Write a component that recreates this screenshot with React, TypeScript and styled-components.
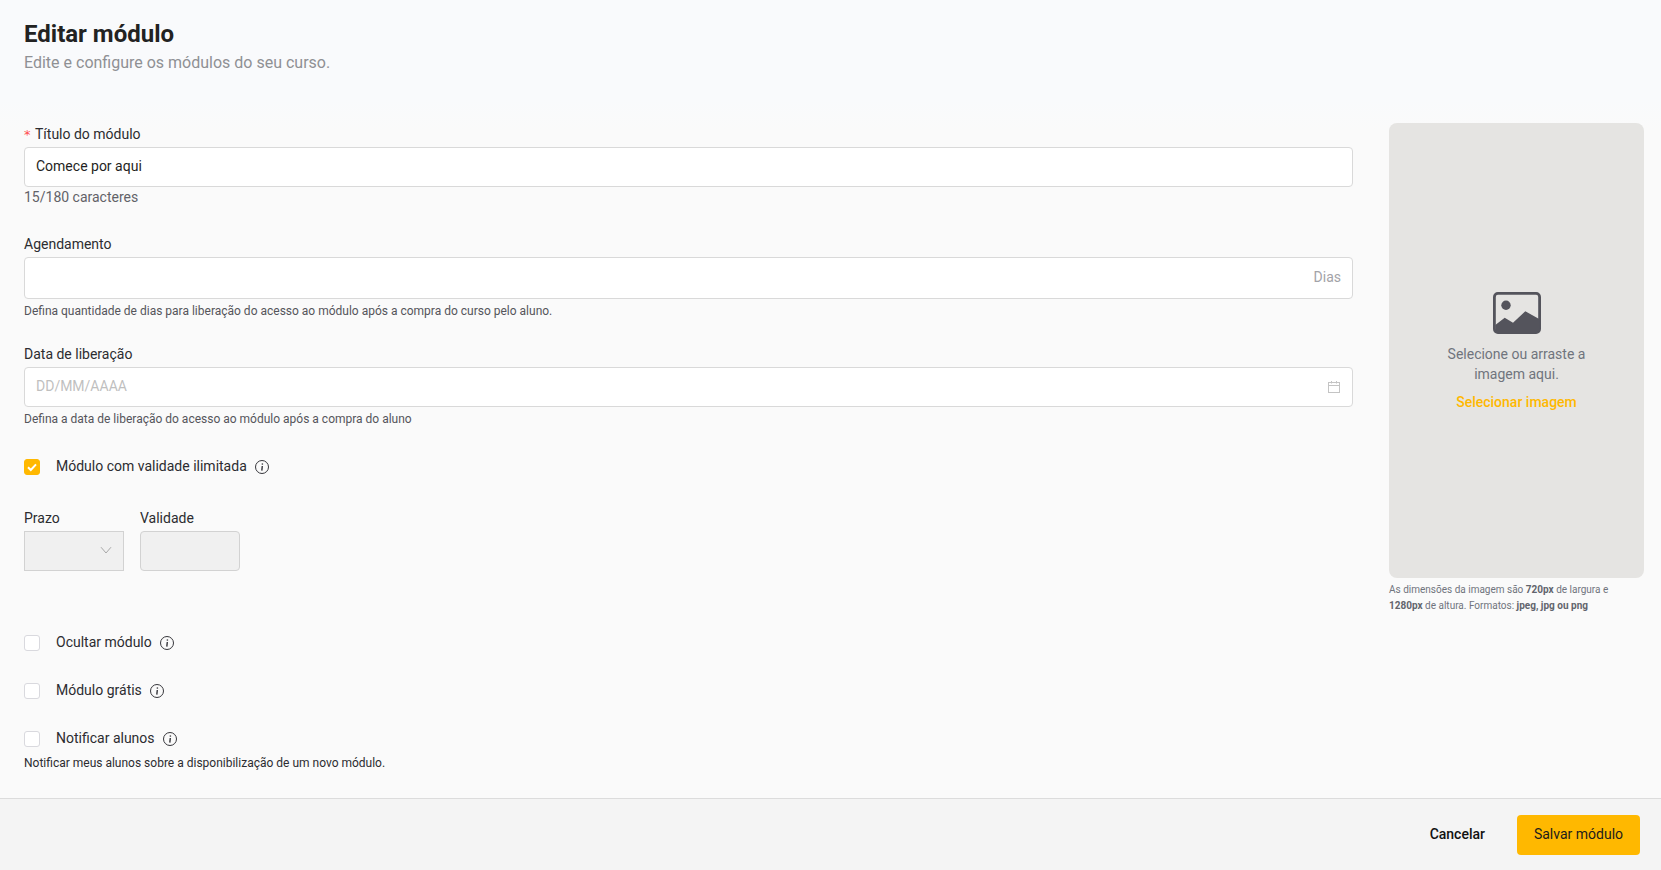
import React from 'react';
import styled, { createGlobalStyle } from 'styled-components';

const GlobalStyle = createGlobalStyle`
  html, body {
    margin: 0;
    padding: 0;
    height: 100%;
    background: #fafafa;
    font-family: Roboto, "Liberation Sans", sans-serif;
  }
  * { box-sizing: border-box; }
`;

const Page = styled.div`
  display: flex;
  flex-direction: column;
  height: 870px;
  background: linear-gradient(to bottom, #f9fafc 0, #f9fafc 100px, #fafafa 130px);
`;

const Header = styled.header`
  height: 123px;
  padding: 20px 24px 0;
`;

const Title = styled.h1`
  margin: 0;
  font-size: 24px;
  line-height: 28px;
  font-weight: 700;
  color: #222222;
`;

const Subtitle = styled.p`
  margin: 3px 0 0;
  font-size: 16px;
  line-height: 24px;
  color: #8f9094;
`;

const Content = styled.main`
  flex: 1;
  display: grid;
  grid-template-columns: 1329px 255px;
  column-gap: 36px;
  padding-left: 24px;
`;

const Form = styled.form`
  display: flex;
  flex-direction: column;
`;

const Label = styled.label`
  display: block;
  height: 24px;
  font-size: 14px;
  line-height: 22px;
  color: #2c2c30;
  white-space: nowrap;
`;

const Required = styled.span`
  color: #ff4d4f;
  font-size: 13px;
  margin-right: 4.5px;
  font-family: SimSun, "DejaVu Sans", sans-serif;
`;

const InputBox = styled.div<{ $height: number; $lift?: boolean }>`
  display: flex;
  align-items: center;
  justify-content: space-between;
  height: ${(p) => p.$height}px;
  padding: 0 11px ${(p) => (p.$lift ? '2px' : '0')};
  background: #ffffff;
  border: 1px solid #d9d9d9;
  border-radius: 4px;
  font-size: 14px;
  color: #1f1f23;
`;

const Placeholder = styled.span`
  color: #bfbfbf;
  padding-bottom: 2px;
`;

const Suffix = styled.span`
  color: #a3a3a8;
  padding-bottom: 2px;
`;

const Counter = styled.div`
  font-size: 14px;
  line-height: 20px;
  color: #626268;
`;

const HelpText = styled.div<{ $dark?: boolean; $mt: number }>`
  margin-top: ${(p) => p.$mt}px;
  font-size: 12px;
  line-height: 18px;
  color: ${(p) => (p.$dark ? '#2c2c30' : '#55555b')};
`;

const Block = styled.div<{ $mt: number }>`
  margin-top: ${(p) => p.$mt}px;
`;

const CheckRow = styled.div<{ $mt: number }>`
  display: flex;
  align-items: center;
  height: 24px;
  margin-top: ${(p) => p.$mt}px;
`;

const CheckBox = styled.span<{ $checked?: boolean }>`
  display: flex;
  align-items: center;
  justify-content: center;
  width: 16px;
  height: 16px;
  margin-right: 16px;
  border-radius: 3px;
  background: ${(p) => (p.$checked ? '#ffb800' : '#ffffff')};
  border: 1px solid ${(p) => (p.$checked ? '#ffb800' : '#d9d9de')};
`;

const CheckText = styled.span`
  padding-bottom: 2px;
  font-size: 14px;
  color: #2c2c30;
  margin-right: 8px;
  white-space: nowrap;
`;

const SmallFields = styled.div`
  display: flex;
  gap: 16px;
  margin-top: 28px;
`;

const SmallField = styled.div`
  width: 100px;
`;

const DisabledBox = styled.div<{ $square?: boolean }>`
  display: flex;
  align-items: center;
  justify-content: flex-end;
  height: 40px;
  padding-right: 11px;
  background: #f0f0f0;
  border: 1px solid #d2d2d2;
  border-radius: ${(p) => (p.$square ? '0' : '4px')};
`;

const Aside = styled.aside`
  display: flex;
  flex-direction: column;
`;

const Dropzone = styled.div`
  display: flex;
  flex-direction: column;
  align-items: center;
  justify-content: center;
  height: 455px;
  padding-top: 3px;
  background: #e5e4e2;
  border-radius: 8px;
`;

const DropText = styled.div`
  width: 160px;
  margin-top: 10px;
  font-size: 14px;
  line-height: 20px;
  text-align: center;
  color: #70747d;
`;

const DropLink = styled.a`
  margin-top: 8px;
  font-size: 14px;
  line-height: 20px;
  font-weight: 500;
  color: #ffb800;
`;

const ImageHint = styled.p`
  margin: 4px 0 0;
  font-size: 10px;
  line-height: 16px;
  color: #70747d;

  b {
    font-weight: 700;
    color: #62656d;
  }
`;

const Footer = styled.footer`
  display: flex;
  align-items: center;
  justify-content: flex-end;
  gap: 32px;
  height: 72px;
  padding: 0 21px 0 0;
  background: #f4f4f4;
  border-top: 1px solid #dcdcdc;
`;

const CancelButton = styled.button`
  padding: 0 0 2px;
  border: 0;
  background: none;
  font-family: inherit;
  font-size: 14px;
  font-weight: 500;
  color: #111111;
`;

const SaveButton = styled.button`
  width: 123px;
  height: 40px;
  padding: 0 0 2px;
  border: 0;
  border-radius: 4px;
  background: #ffb800;
  font-family: inherit;
  font-size: 14px;
  color: #1c1c1c;
`;

const InfoIcon = () => (
  <svg width="14" height="14" viewBox="0 0 14 14" fill="none" stroke="#36363b" strokeWidth="1">
    <circle cx="7" cy="7" r="6.5" />
    <path d="M7.4 3.4v1.3" strokeWidth="1.4" />
    <path d="M7.3 6 6.8 10.6" strokeWidth="1.4" />
  </svg>
);

const CheckIcon = () => (
  <svg width="12" height="12" viewBox="0 0 12 12" fill="none" stroke="#ffffff" strokeWidth="2">
    <path d="M2 6.2 4.8 9 10 3.4" />
  </svg>
);

const CalendarIcon = () => (
  <svg width="14" height="14" viewBox="0 0 14 14" fill="none" stroke="#c4c4c4" strokeWidth="1">
    <rect x="1.5" y="2.5" width="11" height="10" />
    <path d="M1.5 5.5h11M4.5 1v2.5M9.5 1v2.5" />
  </svg>
);

const ChevronIcon = () => (
  <svg width="12" height="12" viewBox="0 0 12 12" fill="none" stroke="#a8a8a8" strokeWidth="1">
    <path d="M1 2.2 6 8 11 2.2" />
  </svg>
);

const ImageIcon = () => (
  <svg width="48" height="42" viewBox="0 0 48 42">
    <rect x="1.4" y="1.4" width="45.2" height="39.2" rx="3.5" fill="none" stroke="#54545c" strokeWidth="2.8" />
    <circle cx="13" cy="13.3" r="4.7" fill="#54545c" />
    <path d="M2.3 33 11.7 25.7 20 30.7 32.3 19.3 46.6 27.3V37a3 3 0 0 1-3 3H5.3a3 3 0 0 1-3-3Z" fill="#54545c" />
  </svg>
);

export default function App() {
  return (
    <Page>
      <GlobalStyle />
      <Header>
        <Title>Editar módulo</Title>
        <Subtitle>Edite e configure os módulos do seu curso.</Subtitle>
      </Header>
      <Content>
        <Form>
          <Label>
            <Required>*</Required>Título do módulo
          </Label>
          <InputBox $height={40} $lift>Comece por aqui</InputBox>
          <Counter>15/180 caracteres</Counter>

          <Block $mt={26}>
            <Label>Agendamento</Label>
            <InputBox $height={42}>
              <span />
              <Suffix>Dias</Suffix>
            </InputBox>
            <HelpText $mt={3}>Defina quantidade de dias para liberação do acesso ao módulo após a compra do curso pelo aluno.</HelpText>
          </Block>

          <Block $mt={23}>
            <Label>Data de liberação</Label>
            <InputBox $height={40}>
              <Placeholder>DD/MM/AAAA</Placeholder>
              <CalendarIcon />
            </InputBox>
            <HelpText $mt={3}>Defina a data de liberação do acesso ao módulo após a compra do aluno</HelpText>
          </Block>

          <CheckRow $mt={27}>
            <CheckBox $checked><CheckIcon /></CheckBox>
            <CheckText>Módulo com validade ilimitada</CheckText>
            <InfoIcon />
          </CheckRow>

          <SmallFields>
            <SmallField>
              <Label>Prazo</Label>
              <DisabledBox $square><ChevronIcon /></DisabledBox>
            </SmallField>
            <SmallField>
              <Label>Validade</Label>
              <DisabledBox />
            </SmallField>
          </SmallFields>

          <CheckRow $mt={60}>
            <CheckBox />
            <CheckText>Ocultar módulo</CheckText>
            <InfoIcon />
          </CheckRow>
          <CheckRow $mt={24}>
            <CheckBox />
            <CheckText>Módulo grátis</CheckText>
            <InfoIcon />
          </CheckRow>
          <CheckRow $mt={24}>
            <CheckBox />
            <CheckText>Notificar alunos</CheckText>
            <InfoIcon />
          </CheckRow>
          <HelpText $dark $mt={3}>Notificar meus alunos sobre a disponibilização de um novo módulo.</HelpText>
        </Form>

        <Aside>
          <Dropzone>
            <ImageIcon />
            <DropText>Selecione ou arraste a imagem aqui.</DropText>
            <DropLink>Selecionar imagem</DropLink>
          </Dropzone>
          <ImageHint>
            As dimensões da imagem são <b>720px</b> de largura e <b>1280px</b> de altura. Formatos: <b>jpeg, jpg ou png</b>
          </ImageHint>
        </Aside>
      </Content>
      <Footer>
        <CancelButton>Cancelar</CancelButton>
        <SaveButton>Salvar módulo</SaveButton>
      </Footer>
    </Page>
  );
}
